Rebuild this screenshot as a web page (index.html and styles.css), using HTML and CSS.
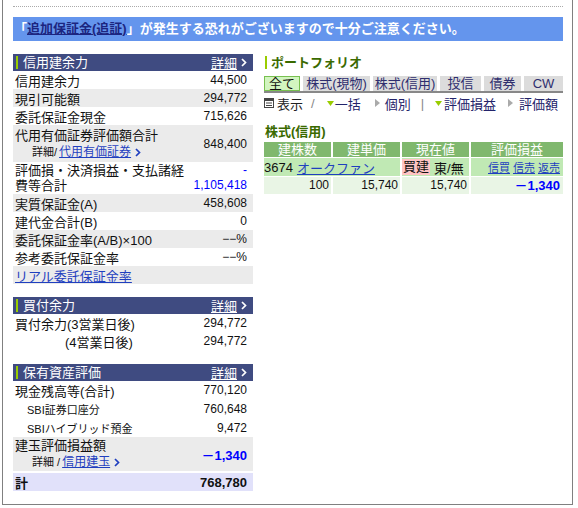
FILE: index.html
```html
<!DOCTYPE html>
<html lang="ja">
<head>
<meta charset="utf-8">
<title>ポートフォリオ</title>
<link rel="stylesheet" href="styles.css">
</head>
<body>
<div class="frame">
  <div class="dots"></div>
  <div class="banner">「<a href="#">追加保証金(追証)</a>」が発生する恐れがございますので十分ご注意ください。</div>

  <div class="cols">
    <div class="left">
      <div class="panel">
        <div class="phead"><span class="ptitle">信用建余力</span><a class="more" href="#">詳細</a><svg class="chev" viewBox="0 0 6 9" width="6" height="9"><path d="M1 1 L4.5 4.5 L1 8" /></svg></div>
        <div class="row"><span>信用建余力</span><span class="num">44,500</span></div>
        <div class="row g"><span>現引可能額</span><span class="num">294,772</span></div>
        <div class="row"><span>委託保証金現金</span><span class="num">715,626</span></div>
        <div class="row g r37">
          <div class="lab2">
            <div class="l1">代用有価証券評価額合計</div>
            <div class="sub">詳細/ <a href="#">代用有価証券</a><svg class="chev blue" viewBox="0 0 6 9" width="6" height="9"><path d="M1 1 L4.5 4.5 L1 8" /></svg></div>
          </div>
          <span class="num">848,400</span>
        </div>
        <div class="row r32">
          <div class="lab2 tight">
            <div>評価損・決済損益・支払諸経</div>
            <div>費等合計</div>
          </div>
          <div class="num2">
            <div class="blue">-</div>
            <div class="blue">1,105,418</div>
          </div>
        </div>
        <div class="row g"><span>実質保証金(A)</span><span class="num">458,608</span></div>
        <div class="row"><span>建代金合計(B)</span><span class="num">0</span></div>
        <div class="row g"><span>委託保証金率(A/B)×100</span><span class="num">−−%</span></div>
        <div class="row"><span>参考委託保証金率</span><span class="num">−−%</span></div>
        <div class="row g"><a href="#">リアル委託保証金率</a></div>
      </div>

      <div class="panel sec2">
        <div class="phead"><span class="ptitle">買付余力</span><a class="more" href="#">詳細</a><svg class="chev" viewBox="0 0 6 9" width="6" height="9"><path d="M1 1 L4.5 4.5 L1 8" /></svg></div>
        <div class="row"><span>買付余力(3営業日後)</span><span class="num">294,772</span></div>
        <div class="row"><span class="ind">(4営業日後)</span><span class="num">294,772</span></div>
      </div>

      <div class="panel sec3">
        <div class="phead"><span class="ptitle">保有資産評価</span><a class="more" href="#">詳細</a><svg class="chev" viewBox="0 0 6 9" width="6" height="9"><path d="M1 1 L4.5 4.5 L1 8" /></svg></div>
        <div class="row"><span>現金残高等(合計)</span><span class="num">770,120</span></div>
        <div class="row r19"><span class="small">SBI証券口座分</span><span class="num">760,648</span></div>
        <div class="row r19"><span class="small">SBIハイブリッド預金</span><span class="num">9,472</span></div>
        <div class="row g r34">
          <div class="lab2">
            <div class="l1b">建玉評価損益額</div>
            <div class="sub">詳細 / <a href="#">信用建玉</a><svg class="chev blue" viewBox="0 0 6 9" width="6" height="9"><path d="M1 1 L4.5 4.5 L1 8" /></svg></div>
          </div>
          <span class="bnum blue">－1,340</span>
        </div>
        <div class="row total"><span class="bold">計</span><span class="bnum">768,780</span></div>
      </div>
    </div>

    <div class="right">
      <div class="rtitle"><span>ポートフォリオ</span></div>
      <div class="tabs">
        <div class="tab on" style="width:36px">全て</div>
        <div class="tab" style="width:67px">株式(現物)</div>
        <div class="tab" style="width:64px">株式(信用)</div>
        <div class="tab" style="width:41px">投信</div>
        <div class="tab" style="width:37px">債券</div>
        <div class="tab" style="width:39px">CW</div>
      </div>
      <div class="view">
        <svg class="ico" viewBox="0 0 10 10" width="10" height="10"><rect x="0.5" y="0.5" width="9" height="9" fill="none" stroke="#444"/><rect x="1" y="1" width="8" height="2" fill="#444"/><path d="M2 5 H8 M2 7.5 H8" stroke="#444" stroke-width="1"/></svg>
        <span class="v-show">表示</span>
        <span class="v-slash">/</span>
        <svg class="tri-d t1" viewBox="0 0 7 5" width="7" height="5"><path d="M0 0 H7 L3.5 5 Z"/></svg>
        <span class="v-link m1">一括</span>
        <svg class="tri-r t2" viewBox="0 0 5 8" width="5" height="8"><path d="M0 0 L5 4 L0 8 Z"/></svg>
        <span class="v-link m5">個別</span>
        <span class="v-bar">|</span>
        <svg class="tri-d t3" viewBox="0 0 7 5" width="7" height="5"><path d="M0 0 H7 L3.5 5 Z"/></svg>
        <span class="v-link m2">評価損益</span>
        <svg class="tri-r t4" viewBox="0 0 5 8" width="5" height="8"><path d="M0 0 L5 4 L0 8 Z"/></svg>
        <span class="v-link m6">評価額</span>
      </div>

      <div class="stitle">株式(信用)</div>
      <div class="tbl">
        <div class="th">建株数</div>
        <div class="th">建単価</div>
        <div class="th">現在値</div>
        <div class="th">評価損益</div>

        <div class="td2 span2"><span>3674</span> <a href="#">オークファン</a></div>
        <div class="td2"><span class="buy">買建</span> <span>東/無</span></div>
        <div class="td2 acts"><a href="#">信買</a> <a href="#">信売</a> <a href="#">返売</a></div>

        <div class="td3">100</div>
        <div class="td3">15,740</div>
        <div class="td3">15,740</div>
        <div class="td3 bnum blue">－1,340</div>
      </div>
    </div>
  </div>
</div>
</body>
</html>
```

FILE: styles.css
```css
* { box-sizing: border-box; margin: 0; padding: 0; }

body {
  margin: 0;
  background: #fff;
  color: #111;
  font-family: "Liberation Sans", "Noto Sans CJK JP", sans-serif;
  font-size: 13px;
}

a { color: #1f3fbf; text-decoration: underline; }

.frame {
  margin-left: 2px;
  width: 571px;
  height: 505px;
  border: 1px solid #808080;
  border-top: none;
  padding: 6px 9px 0 10px;
}

.dots { border-top: 1px dotted #aaa; height: 0; }

.banner {
  margin-top: 10px;
  height: 24px;
  line-height: 24px;
  background: #6495ed;
  color: #fff;
  font-weight: bold;
  padding-left: 1px;
  white-space: nowrap;
}
.banner a { color: #1c2580; }

.cols {
  display: flex;
  align-items: flex-start;
  gap: 11px;
  margin-top: 13px;
}
.left { width: 240px; }
.right { width: 299px; }

/* left panels */
.phead {
  height: 17px;
  background: #3f4b81;
  color: #fff;
  display: flex;
  align-items: center;
  padding: 0 6px 0 3px;
}
.ptitle {
  flex: 1;
  border-left: 2px solid #99cc00;
  padding-left: 5px;
  line-height: 13px;
}
.more { color: #fff; }
.chev { margin-left: 4px; }
.chev path { fill: none; stroke: #fff; stroke-width: 1.7; }
.chev.blue path { stroke: #1f3fbf; }

.sec2 { margin-top: 13px; }
.sec3 { margin-top: 14px; }

.row {
  display: flex;
  justify-content: space-between;
  align-items: center;
  height: 18px;
  padding: 0 6px 0 2px;
  white-space: nowrap;
}
.row.g { background: #ebebeb; }
.row.r37 { height: 37px; padding-top: 1px; }
.row.r32 { height: 32px; }
.row.r34 { height: 34px; }
.row.r19 { height: 19px; }
.row.total { background: #e1e1fa; margin-top: 2px; }

.num { font-size: 12px; }
.bnum { font-size: 13px; font-weight: bold; }
.bold { font-weight: bold; }
.blue { color: #0000ff; }
.num2 { font-size: 12px; text-align: right; line-height: 15px; }

.lab2 .l1 { line-height: 17px; }
.lab2 .l1b { line-height: 16px; }
.lab2.tight { line-height: 15px; }
.sub {
  font-size: 11px;
  line-height: 17px;
  padding-left: 17px;
  display: flex;
  align-items: center;
}
.sub a { font-size: 12px; margin-left: 2px; }

.ind { padding-left: 50px; }
.small { font-size: 11px; padding-left: 12px; }

/* right column */
.rtitle {
  height: 17px;
  display: flex;
  align-items: center;
  padding-left: 1px;
  color: #3a6a00;
  font-weight: bold;
}
.rtitle span {
  border-left: 2px solid #99cc00;
  padding-left: 4px;
  line-height: 13px;
}

.tabs {
  display: flex;
  gap: 3px;
  margin-top: 5px;
  border-bottom: 2px solid #888;
}
.tab {
  height: 15px;
  line-height: 15px;
  text-align: center;
  background: #dcdcdc;
  color: #2e2e6e;
  white-space: nowrap;
}
.tab.on {
  background: #d2f5c0;
  border: 1px solid #78c050;
  line-height: 13px;
  color: #111;
}

.view {
  height: 20px;
  display: flex;
  align-items: center;
  white-space: nowrap;
  color: #23236a;
}
.ico { flex: none; }
.v-show { margin-left: 3px; color: #222; }
.v-slash { margin-left: 8px; color: #888; }
.v-bar { margin-left: 10px; color: #888; }
.tri-d path { fill: #99cc00; }
.tri-r path { fill: #aaa; }
.t1 { margin-left: 12px; }
.t2 { margin-left: 14px; }
.t3 { margin-left: 11px; }
.t4 { margin-left: 12px; }
.m1 { margin-left: 1px; }
.m2 { margin-left: 2px; }
.m5 { margin-left: 5px; }
.m6 { margin-left: 6px; }

.stitle {
  margin-top: 10px;
  height: 18px;
  line-height: 18px;
  padding-left: 1px;
  color: #3a6a00;
  font-weight: bold;
}

.tbl {
  margin-top: 1px;
  display: grid;
  grid-template-columns: 67px 67px 67px 92px;
  column-gap: 2px;
  row-gap: 1px;
}
.th {
  height: 15px;
  line-height: 15px;
  background: #80b86e;
  color: #fff;
  text-align: center;
}
.td2 {
  height: 18px;
  display: flex;
  align-items: center;
  gap: 4px;
  background: #c0e9b4;
  white-space: nowrap;
  color: #111;
}
.span2 { grid-column: span 2; }
.buy {
  background: #ffc4c4;
  padding: 0 1px;
  line-height: 16px;
}
.acts {
  justify-content: flex-end;
  padding-right: 3px;
  font-size: 11px;
  gap: 3px;
}
.td3 {
  height: 17px;
  line-height: 17px;
  background: #e9f5e5;
  text-align: right;
  padding-right: 2px;
  font-size: 12px;
}
.td3.bnum { font-size: 13px; padding-right: 3px; }
```
